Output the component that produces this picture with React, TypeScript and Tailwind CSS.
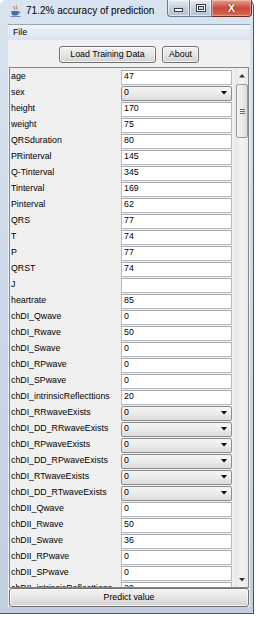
import React from 'react';

type Row = { label: string; value: string; combo?: boolean };

const rows: Row[] = [
  { label: 'age', value: '47' },
  { label: 'sex', value: '0', combo: true },
  { label: 'height', value: '170' },
  { label: 'weight', value: '75' },
  { label: 'QRSduration', value: '80' },
  { label: 'PRinterval', value: '145' },
  { label: 'Q-Tinterval', value: '345' },
  { label: 'Tinterval', value: '169' },
  { label: 'Pinterval', value: '62' },
  { label: 'QRS', value: '77' },
  { label: 'T', value: '74' },
  { label: 'P', value: '77' },
  { label: 'QRST', value: '74' },
  { label: 'J', value: '' },
  { label: 'heartrate', value: '85' },
  { label: 'chDI_Qwave', value: '0' },
  { label: 'chDI_Rwave', value: '50' },
  { label: 'chDI_Swave', value: '0' },
  { label: 'chDI_RPwave', value: '0' },
  { label: 'chDI_SPwave', value: '0' },
  { label: 'chDI_intrinsicReflecttions', value: '20' },
  { label: 'chDI_RRwaveExists', value: '0', combo: true },
  { label: 'chDI_DD_RRwaveExists', value: '0', combo: true },
  { label: 'chDI_RPwaveExists', value: '0', combo: true },
  { label: 'chDI_DD_RPwaveExists', value: '0', combo: true },
  { label: 'chDI_RTwaveExists', value: '0', combo: true },
  { label: 'chDI_DD_RTwaveExists', value: '0', combo: true },
  { label: 'chDII_Qwave', value: '0' },
  { label: 'chDII_Rwave', value: '50' },
  { label: 'chDII_Swave', value: '36' },
  { label: 'chDII_RPwave', value: '0' },
  { label: 'chDII_SPwave', value: '0' },
  { label: 'chDII_intrinsicReflecttions', value: '20' },
];

const font = { fontFamily: '"Liberation Sans", Arial, sans-serif' };

function JavaIcon() {
  return (
    <svg width="11" height="12" viewBox="0 0 11 12">
      <path d="M4 1 C3 2.5 6 3 4.5 5" stroke="#e0602a" strokeWidth="1" fill="none" />
      <path d="M6.5 0.5 C5.5 2 8 2.5 6.5 4.5" stroke="#e0602a" strokeWidth="1" fill="none" />
      <path d="M1.5 6 H8.5 V8.5 C8.5 10 7 10.5 5 10.5 C3 10.5 1.5 10 1.5 8.5 Z" fill="#3f6fb0" />
      <path d="M8.5 6.5 C10.5 6.5 10.5 8.5 8.5 8.5" stroke="#3f6fb0" strokeWidth="0.9" fill="none" />
      <rect x="0.5" y="11" width="10" height="1" fill="#6d8fbf" />
    </svg>
  );
}

function TitleButtons() {
  return (
    <div className="flex h-[17px]">
      <div className="flex h-[17px] w-[23px] items-center justify-center rounded-bl-[4px] border border-t-0 border-[#6b7a8f] bg-gradient-to-b from-[#e4ebf3] via-[#c6d1de] to-[#b3c1d2] shadow-[inset_0_0_0_1px_rgba(255,255,255,0.6)]">
        <div className="mt-[4px] h-[4px] w-[9px] border border-[#39404a] bg-white" />
      </div>
      <div className="flex h-[17px] w-[22px] items-center justify-center border border-l-0 border-t-0 border-[#6b7a8f] bg-gradient-to-b from-[#e4ebf3] via-[#c6d1de] to-[#b3c1d2] shadow-[inset_0_0_0_1px_rgba(255,255,255,0.6)]">
        <div className="h-[8px] w-[10px] border border-[#39404a] bg-white p-[1px]">
          <div className="h-full w-full border border-[#39404a] bg-[#c6d1de]" />
        </div>
      </div>
      <div className="flex h-[17px] w-[40px] items-center justify-center rounded-br-[4px] border border-l-0 border-t-0 border-[#6b2b22] bg-gradient-to-b from-[#e9a08c] via-[#c9483a] to-[#d26a52] shadow-[inset_0_0_0_1px_rgba(255,255,255,0.35)]">
        <span
          className="text-[11px] font-bold leading-none text-white"
          style={{ ...font, textShadow: '0 0 1px #4a1a14, 0 0 1px #4a1a14' }}
        >
          X
        </span>
      </div>
    </div>
  );
}

function WinButton({ label, className }: { label: string; className: string }) {
  return (
    <div
      className={`flex items-center justify-center rounded-[3px] border border-[#707070] bg-gradient-to-b from-[#f2f2f2] via-[#e6e6e6] to-[#d2d2d2] text-[8.8px] text-black shadow-[inset_0_0_0_1px_rgba(255,255,255,0.7)] ${className}`}
    >
      {label}
    </div>
  );
}

function Field({ row }: { row: Row }) {
  if (row.combo) {
    return (
      <div className="flex h-[15px] w-[111px] items-center justify-between rounded-[2px] border border-[#8d8d8d] bg-gradient-to-b from-[#f4f4f4] via-[#ebebeb] to-[#dcdcdc] pl-[2px] pr-[4px]">
        <span>{row.value}</span>
        <svg width="6" height="4" viewBox="0 0 6 4">
          <path d="M0 0 H6 L3 3.5 Z" fill="#000" />
        </svg>
      </div>
    );
  }
  return (
    <div className="flex h-[15px] w-[111px] items-center border border-[#b5b9c2] border-t-[#abadb3] bg-white pl-[2px]">
      {row.value}
    </div>
  );
}

function ScrollBar() {
  return (
    <div className="flex w-[13px] flex-col items-center border-l border-[#e6e6e6] bg-gradient-to-r from-[#e8e8e8] via-[#f4f4f4] to-[#e8e8e8]">
      <div className="flex h-[16px] w-full items-center justify-center">
        <svg width="6" height="4" viewBox="0 0 6 4">
          <path d="M0 3.5 H6 L3 0 Z" fill="#333" />
        </svg>
      </div>
      <div className="flex h-[54px] w-[12px] flex-col items-center justify-center gap-[1px] rounded-[2px] border border-[#9a9a9a] bg-gradient-to-r from-[#f3f3f3] via-[#ececec] to-[#dadada]">
        <div className="h-[1px] w-[5px] bg-[#6b6b6b]" />
        <div className="h-[1px] w-[5px] bg-[#6b6b6b]" />
        <div className="h-[1px] w-[5px] bg-[#6b6b6b]" />
      </div>
      <div className="flex-1" />
      <div className="flex h-[14px] w-full items-center justify-center">
        <svg width="6" height="4" viewBox="0 0 6 4">
          <path d="M0 0 H6 L3 3.5 Z" fill="#333" />
        </svg>
      </div>
    </div>
  );
}

export default function App() {
  return (
    <div className="h-[620px] w-[260px] bg-white" style={font}>
      <div className="flex h-[614px] w-[254px] flex-col rounded-t-[6px] border-r border-b border-[#4a5262] bg-gradient-to-b from-[#d9e4f1] via-[#cbd8e7] to-[#c2cfdf]">
        {/* title bar */}
        <div className="flex h-[24px] items-start justify-between pr-[1px]">
          <div className="flex items-center gap-[5px] pl-[10px] pt-[5px]">
            <JavaIcon />
            <span className="text-[10px] leading-none text-black">71.2% accuracy of prediction</span>
          </div>
          <TitleButtons />
        </div>

        {/* client area */}
        <div className="ml-[8px] mr-[3px] flex flex-col border-t border-[#9aa6b6]">
          <div className="flex h-[15px] items-center bg-gradient-to-b from-[#f1f4fa] to-[#dae2ef] pl-[5px] text-[8.8px] text-black">
            File
          </div>
          <div className="flex flex-col bg-[#f0f0f0] text-[8.8px] text-black">
            <div className="flex justify-center gap-[6px] pt-[6px] pb-[4px]">
              <WinButton label="Load Training Data" className="h-[17px] w-[97px]" />
              <WinButton label="About" className="h-[17px] w-[37px]" />
            </div>
            <div className="ml-[1px] mr-[1px] flex h-[521px] border border-[#828790]">
              <div className="flex-1 overflow-hidden pt-[1px]">
                {rows.map((r) => (
                  <div key={r.label} className="flex h-[16px] items-center">
                    <div className="w-[111px] truncate pl-[1px]">{r.label}</div>
                    <Field row={r} />
                  </div>
                ))}
              </div>
              <ScrollBar />
            </div>
            <WinButton label="Predict value" className="mx-[1px] h-[19px]" />
          </div>
        </div>
        <div className="flex-1" />
      </div>
    </div>
  );
}
